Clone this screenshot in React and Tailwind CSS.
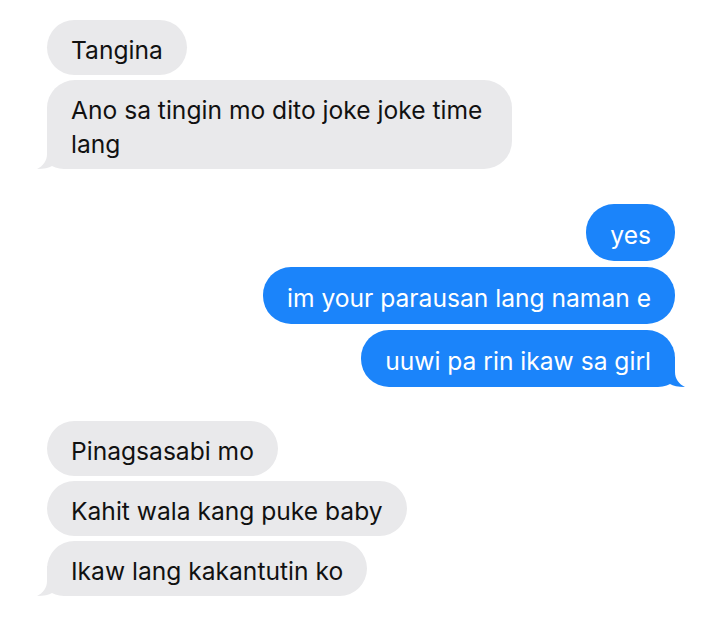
const received1 = ['Tangina', 'Ano sa tingin mo dito joke joke time lang'];
const sent = ['yes', 'im your parausan lang naman e', 'uuwi pa rin ikaw sa girl'];
const received2 = ['Pinagsasabi mo', 'Kahit wala kang puke baby', 'Ikaw lang kakantutin ko'];

// iMessage style tail, drawn for the left side, mirrored for the right
function Tail({ color, right }) {
  return (
    <svg
      viewBox="0 0 40 30"
      className={
        right
          ? 'absolute -right-[10px] bottom-0 w-[40px] h-[30px] -scale-x-100'
          : 'absolute -left-[10px] bottom-0 w-[40px] h-[30px]'
      }
    >
      <path
        d="M10 0 L10 15 C10 22 6 27 0 30 C7 30 12 29 15 27 C19 29.5 25 30 32 30 L40 30 L40 0 Z"
        fill={color}
      />
    </svg>
  );
}

function Bubble({ text, mine, tail, wide }) {
  return (
    <div
      className={`relative rounded-[28px] px-6 ${mine ? 'pt-[13.5px] pb-[9.5px] bg-[#1b84fa] text-white self-end' : 'pt-[12.5px] pb-[8.5px] bg-[#e9e9eb] text-[#111] self-start'} ${wide ? 'max-w-[465px]' : ''}`}
    >
      {tail && <Tail color={mine ? '#1b84fa' : '#e9e9eb'} right={mine} />}
      <p className="relative text-[24.6px] leading-[34px]">{text}</p>
    </div>
  );
}

export default function App() {
  return (
    <div className="w-[720px] h-[637px] bg-white font-['Inter','Liberation_Sans',sans-serif] pl-[47px] pr-[45px] pt-[20px] flex flex-col">
      <div className="flex flex-col gap-[5px]">
        {received1.map((t, i) => (
          <Bubble key={t} text={t} tail={i === received1.length - 1} wide />
        ))}
      </div>
      <div className="flex flex-col gap-[6px] mt-[35px]">
        {sent.map((t, i) => (
          <Bubble key={t} text={t} mine tail={i === sent.length - 1} />
        ))}
      </div>
      <div className="flex flex-col gap-[5px] mt-[34px]">
        {received2.map((t, i) => (
          <Bubble key={t} text={t} tail={i === received2.length - 1} />
        ))}
      </div>
    </div>
  );
}
